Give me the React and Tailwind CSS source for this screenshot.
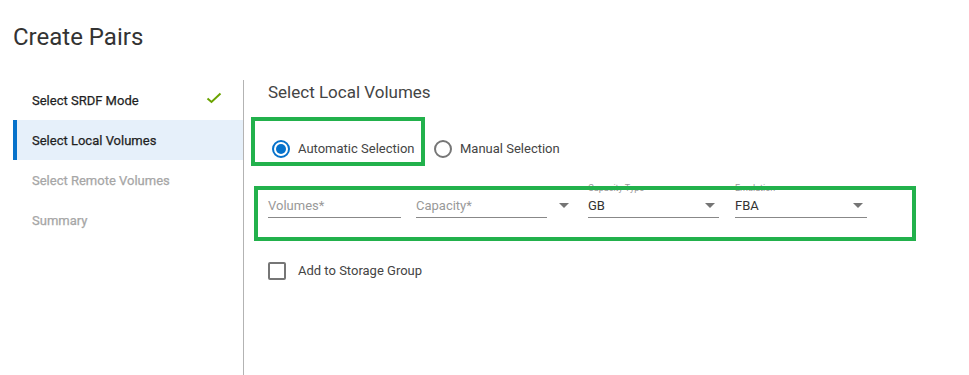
import React, { useState } from 'react';

const Caret = () => (
  <svg width="10" height="5" viewBox="0 0 10 5" className="shrink-0">
    <path d="M0 0 L10 0 L5 5 Z" fill="#757575" />
  </svg>
);

const steps = [
  { label: 'Select SRDF Mode', state: 'done' },
  { label: 'Select Local Volumes', state: 'active' },
  { label: 'Select Remote Volumes', state: 'todo' },
  { label: 'Summary', state: 'todo' },
];

const App = () => {
  const [mode, setMode] = useState('auto');
  const [addToSg, setAddToSg] = useState(false);

  return (
    <div className="w-[969px] h-[375px] bg-white overflow-hidden" style={{ fontFamily: 'Roboto, "Liberation Sans", sans-serif' }}>
      {/* Title */}
      <h1 className="pl-[13px] pt-[22px] h-[80px] text-[24px] leading-[30px] text-[#333]">Create Pairs</h1>

      <div className="flex h-[295px]">
        {/* Steps */}
        <div className="w-[244px] pl-[13px] border-r border-[#b3b3b3] shrink-0">
          {steps.map(step => (
            <div
              key={step.label}
              className={`h-[40px] flex items-center justify-between pt-[2px] pr-[21px] text-[13px] [-webkit-text-stroke:0.25px] ${
                step.state === 'active'
                  ? 'bg-[#e6f0fa] border-l-4 border-[#0672cb] pl-[15px] text-[#1f1f1f]'
                  : step.state === 'done'
                  ? 'pl-[19px] text-[#1f1f1f]'
                  : 'pl-[19px] text-[#a6a6a6]'
              }`}
            >
              <span>{step.label}</span>
              {step.state === 'done' && (
                <svg width="16" height="12" viewBox="0 0 16 12" className="-mt-[6px]">
                  <path d="M1.5 6.5 L5.5 10 L14.5 1.5" fill="none" stroke="#6aa300" strokeWidth="2" />
                </svg>
              )}
            </div>
          ))}
        </div>

        {/* Content */}
        <div className="flex-1 pl-[7px]">
          <h2 className="pl-[17px] text-[17px] leading-[24px] text-[#444]">Select Local Volumes</h2>

          {/* Mode radios */}
          <div className="flex items-end mt-[13px]">
            <div className="border-4 border-[#22b14c] w-[174px] h-[49px] flex items-end pb-[3px] pl-[17px]">
              <label className="flex items-center gap-[8px] h-[20px] cursor-pointer" onClick={() => setMode('auto')}>
                <span className={`w-[18px] h-[18px] rounded-full border-2 flex items-center justify-center ${mode === 'auto' ? 'border-[#0672cb]' : 'border-[#767676]'}`}>
                  {mode === 'auto' && <span className="w-[10px] h-[10px] rounded-full bg-[#0672cb]" />}
                </span>
                <span className="text-[13px] text-[#444]">Automatic Selection</span>
              </label>
            </div>
            <label className="flex items-center gap-[8px] h-[20px] ml-[9px] mb-[7px] cursor-pointer" onClick={() => setMode('manual')}>
              <span className={`w-[18px] h-[18px] rounded-full border-2 flex items-center justify-center ${mode === 'manual' ? 'border-[#0672cb]' : 'border-[#767676]'}`}>
                {mode === 'manual' && <span className="w-[10px] h-[10px] rounded-full bg-[#0672cb]" />}
              </span>
              <span className="text-[13px] text-[#444]">Manual Selection</span>
            </label>
          </div>

          {/* Fields */}
          <div className="relative mt-[20px] ml-[3px] w-[662px] h-[55px] pl-[14px] pt-[10px]">
            <div className="flex items-start">
              <div className="w-[133px] h-[22px] border-b border-[#888] text-[13px] text-[#999] leading-[20px]">Volumes*</div>
              <div className="w-[131px] ml-[15px] h-[22px] border-b border-[#888] text-[13px] text-[#999] leading-[20px]">Capacity*</div>
              <div className="ml-[12px] mt-[7px]"><Caret /></div>
              <div className="relative w-[131px] ml-[19px] h-[22px] border-b border-[#888] flex items-start justify-between pr-[4px]">
                <span className="absolute left-0 -top-[13px] text-[9px] text-[#999] leading-[10px]">Capacity Type</span>
                <span className="text-[13px] text-[#333] leading-[20px]">GB</span>
                <span className="mt-[7px]"><Caret /></span>
              </div>
              <div className="relative w-[132px] ml-[16px] h-[22px] border-b border-[#888] flex items-start justify-between pr-[4px]">
                <span className="absolute left-0 -top-[13px] text-[9px] text-[#999] leading-[10px]">Emulation</span>
                <span className="text-[13px] text-[#333] leading-[20px]">FBA</span>
                <span className="mt-[7px]"><Caret /></span>
              </div>
            </div>
            {/* highlight frame */}
            <div className="absolute inset-0 border-4 border-[#22b14c] pointer-events-none" />
          </div>

          {/* Checkbox */}
          <label className="flex items-center gap-[12px] pl-[17px] mt-[20px] cursor-pointer" onClick={() => setAddToSg(v => !v)}>
            <span className={`w-[18px] h-[18px] rounded-[2px] border-2 flex items-center justify-center ${addToSg ? 'bg-[#0672cb] border-[#0672cb]' : 'border-[#767676]'}`}>
              {addToSg && (
                <svg width="12" height="10" viewBox="0 0 12 10"><path d="M1 5 L4.5 8.5 L11 1" fill="none" stroke="#fff" strokeWidth="2" /></svg>
              )}
            </span>
            <span className="text-[13px] text-[#444]">Add to Storage Group</span>
          </label>
        </div>
      </div>
    </div>
  );
};

export default App;
